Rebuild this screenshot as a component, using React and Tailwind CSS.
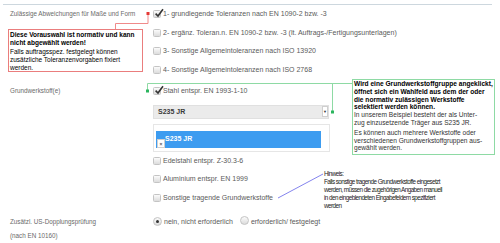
import React from 'react';

function Check({ checked }) {
    return (
        <span className="relative inline-block w-[8px] h-[8px] shrink-0 rounded-[1.5px] border border-[#c4c4c4] bg-linear-to-b from-[#fbfbfb] to-[#dcdcdc]">
            {checked && (
                <svg className="absolute left-[0px] top-[-3px] w-[10px] h-[10px]" viewBox="0 0 10 10">
                    <path d="M1.6 5.6 L4 8 L9 1.2" fill="none" stroke="#333" strokeWidth="1.6" />
                </svg>
            )}
        </span>
    );
}

function Radio({ checked }) {
    return (
        <span className="relative inline-flex items-center justify-center w-[9px] h-[9px] shrink-0 rounded-full border border-[#c4c4c4] bg-linear-to-b from-[#fbfbfb] to-[#dcdcdc]">
            {checked && <span className="w-[3px] h-[3px] rounded-full bg-[#333]" />}
        </span>
    );
}

function Option({ checked, children, h = 'h-[18.5px]' }) {
    return (
        <div className={`${h} flex items-center gap-[2px] whitespace-nowrap`}>
            <Check checked={checked} />
            <span>{children}</span>
        </div>
    );
}

export default function App() {
    return (
        <div className="relative w-[500px] h-[243px] overflow-hidden bg-white font-['Liberation_Sans',Arial,sans-serif] text-[7px] leading-[8px] text-[#6a6a6a]">
            <div className="ml-[3px] mr-[8px] mt-[4px] border-t border-[#cdd7de]">
                {/* Toleranzen */}
                <div className="flex">
                    <div className="w-[150px] pl-[7px] h-[18.5px] flex items-center whitespace-nowrap text-[6.3px]">
                        Zulässige Abweichungen für Maße und Form
                    </div>
                    <div className="text-[#5a5a5a]">
                        <Option checked>1- grundlegende Toleranzen nach EN 1090-2 bzw. -3</Option>
                        <Option>2- ergänz. Toleran.n. EN 1090-2 bzw. -3 (lt. Auftrags-/Fertigungsunterlagen)</Option>
                        <Option>3- Sonstige Allgemeintoleranzen nach ISO 13920</Option>
                        <Option>4- Sonstige Allgemeintoleranzen nach ISO 2768</Option>
                    </div>
                </div>

                {/* Grundwerkstoff */}
                <div className="flex mt-[2.5px]">
                    <div className="w-[150px] pl-[7px] h-[18px] flex items-center text-[6.3px]">Grundwerkstoff(e)</div>
                    <div className="w-[177px] text-[#5a5a5a]">
                        <Option checked h="h-[18px]">Stahl entspr. EN 1993-1-10</Option>
                        <div className="mt-[5px] w-[176px] h-[14px] flex items-center justify-between bg-[#ebebeb] border border-[#e0e0e0] pl-[4px]">
                            <span className="font-semibold text-[#3a3a3a]">S235 JR</span>
                            <span className="w-[6px] h-[11px] bg-white border border-[#cfcfcf] flex items-center justify-center text-[4px] text-[#333]">▼</span>
                        </div>
                        <div className="mt-[5px] h-[28px] border border-[#e6e6e6] pt-[6px] pl-[2px] pr-[8px]">
                            <div className="relative h-[17px] bg-[#3d9cf0] pl-[9px] flex items-center font-semibold text-white">
                                S235 JR
                                <span className="absolute left-[1px] top-[8px] w-[8px] h-[9px] bg-white border border-[#d0d0d0] flex items-end justify-center text-[5px] leading-[5px] text-[#555]">×</span>
                            </div>
                        </div>
                        <Option>Edelstahl entspr. Z-30.3-6</Option>
                        <Option>Aluminium entspr. EN 1999</Option>
                        <Option>Sonstige tragende Grundwerkstoffe</Option>
                    </div>
                </div>

                {/* US-Prüfung */}
                <div className="flex mt-[7.5px]">
                    <div className="w-[150px] pl-[7px] leading-[14px] text-[6.3px]">
                        Zusätzl. US-Dopplungsprüfung
                        <br />
                        (nach EN 10160)
                    </div>
                    <div className="h-[14px] flex items-center gap-[2px] whitespace-nowrap text-[#5a5a5a]">
                        <Radio checked />
                        <span>nein, nicht erforderlich</span>
                        <span className="ml-[5px]"><Radio /></span>
                        <span>erforderlich/ festgelegt</span>
                    </div>
                </div>
            </div>

            {/* callout lines */}
            <svg className="absolute inset-0 pointer-events-none" width="500" height="243">
                <polyline points="148,13.5 148,23.5 115.5,23.5 115.5,29" fill="none" stroke="#f08a8a" strokeWidth="1" />
                <rect x="146.5" y="12" width="3" height="3" fill="#e53935" />
                <polyline points="147.5,91 147.5,83.5 352,83.5" fill="none" stroke="#8edaa4" strokeWidth="1" />
                <polyline points="332.5,83.5 332.5,112" fill="none" stroke="#8edaa4" strokeWidth="1" />
                <rect x="146" y="89.5" width="3" height="3" fill="#2bb55e" />
                <rect x="331" y="110.5" width="3" height="3" fill="#2bb55e" />
                <line x1="278" y1="198" x2="323" y2="174" stroke="#8484ee" strokeWidth="1" />
            </svg>

            {/* red note */}
            <div className="absolute left-[8px] top-[29px] w-[135px] h-[43px] border border-[#ea7d7d] bg-white pl-[1px] pt-[1px] text-[6.5px] leading-[8.3px] text-black whitespace-nowrap">
                <b>Diese Vorauswahl ist normativ und kann<br />nicht abgewählt werden!</b>
                <br />
                Falls auftragsspez. festgelegt können<br />
                zusätzliche Toleranzenvorgaben fixiert<br />
                werden.
            </div>

            {/* green note */}
            <div className="absolute left-[352px] top-[79px] w-[143px] h-[76px] border border-[#8edaa4] bg-white pl-[1px] text-[6.6px] leading-[7.8px] text-black whitespace-nowrap">
                <b>
                    Wird eine Grundwerkstoffgruppe angeklickt,<br />
                    öffnet sich ein Wahlfeld aus dem der oder<br />
                    die normativ zulässigen Werkstoffe<br />
                    selektiert werden können.
                </b>
                <div className="text-[#333]">
                    In unserem Beispiel besteht der als Unter-<br />
                    zug einzusetzende Träger aus S235 JR.
                </div>
                <div className="mt-[2px] text-[#333]">
                    Es können auch mehrere Werkstoffe oder<br />
                    verschiedenen Grundwerkstoffgruppen aus-<br />
                    gewählt werden.
                </div>
            </div>

            {/* hint */}
            <div className="absolute left-[324px] top-[170px] text-[6.3px] leading-[8px] tracking-[-0.55px] text-[#222] whitespace-nowrap">
                Hinweis:<br />
                Falls sonstige tragende Grundwerkstoffe eingesetzt<br />
                werden, müssen die zugehörigen Angaben manuell<br />
                in den eingeblendeten Eingabefeldem spezifiziert<br />
                werden
            </div>
        </div>
    );
}
